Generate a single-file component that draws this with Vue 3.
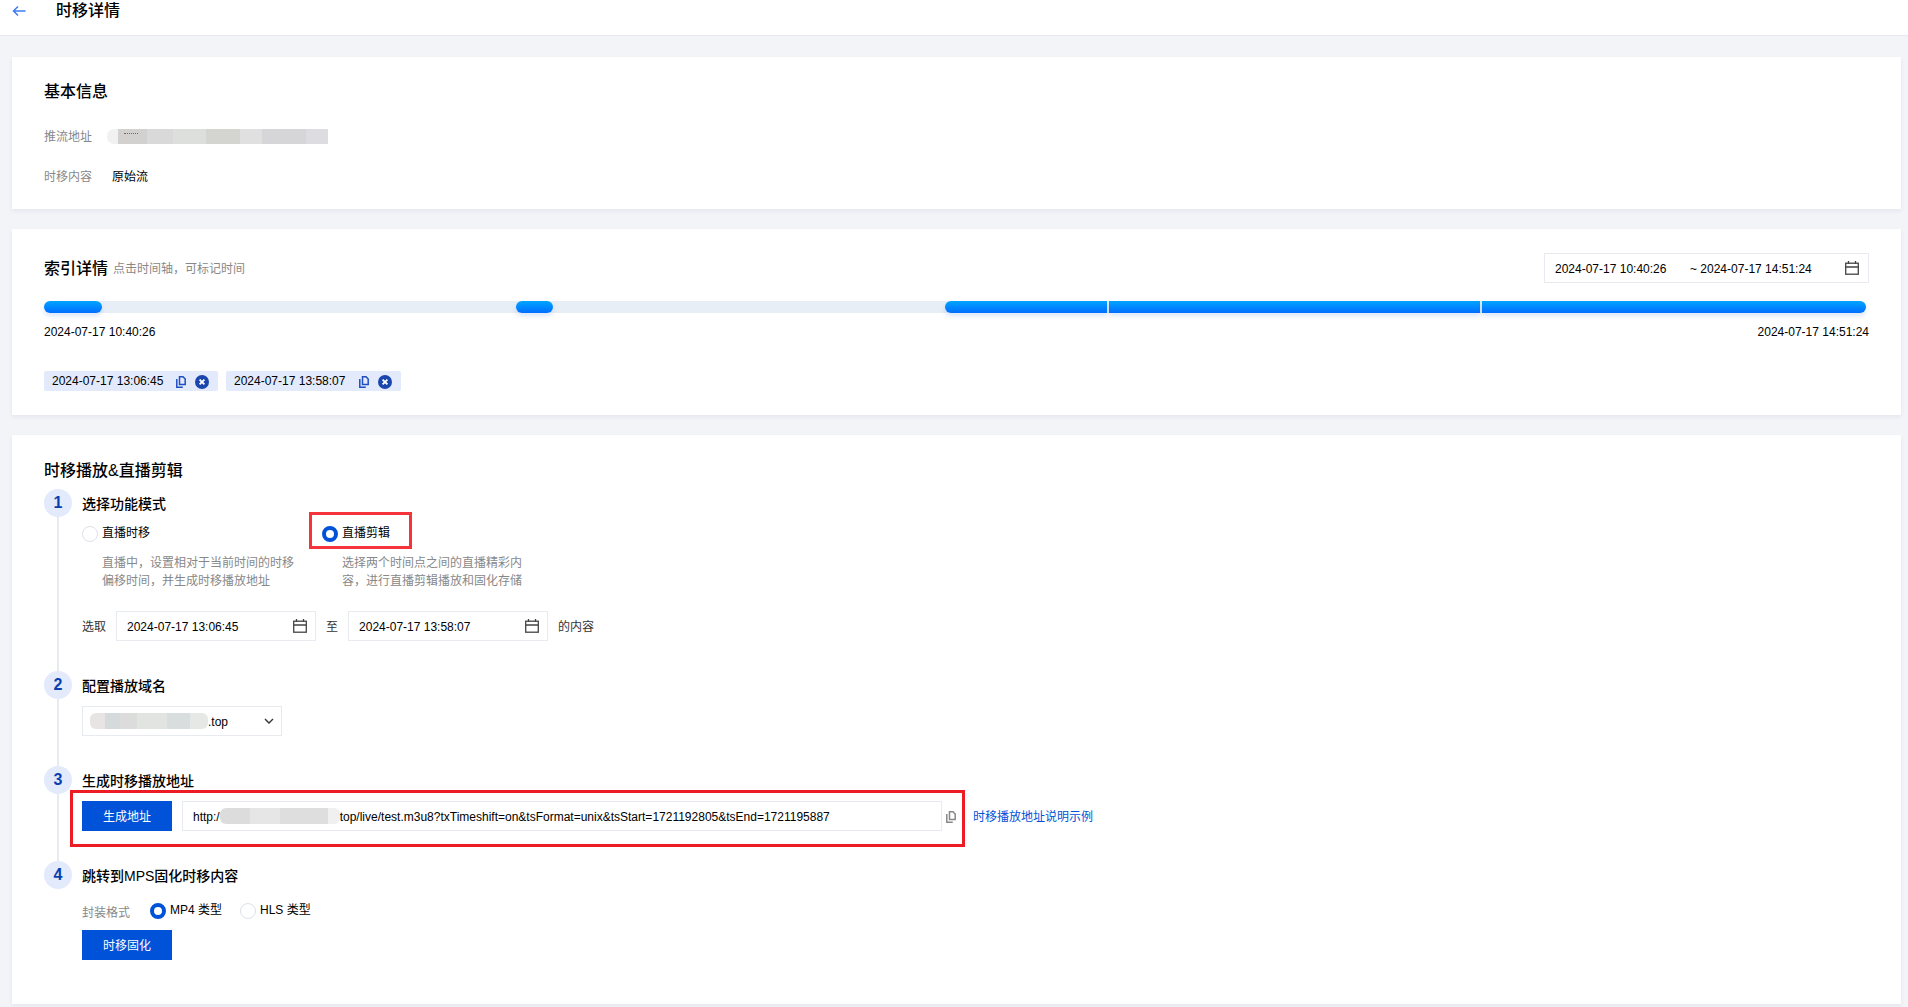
<script setup>
const segments = [
  { left: 0, width: 58 },
  { left: 472, width: 37 },
  { left: 901, width: 162 },
  { left: 1064.5, width: 371.5 },
  { left: 1437.5, width: 384.5 }
]
const tags = ['2024-07-17 13:06:45', '2024-07-17 13:58:07']
function segStyle(s) {
  return { left: s.left + 'px', width: s.width + 'px' }
}
</script>

<template>
  <div class="page">
    <header class="topbar">
      <svg class="back" width="14" height="12" viewBox="0 0 14 12" fill="none">
        <path d="M13.5 6H1.5M6 1.5L1.5 6L6 10.5" stroke="#3d7cf0" stroke-width="1.5" />
      </svg>
      <h1 class="page-title">时移详情</h1>
    </header>

    <section class="card info">
      <h2 class="card-title">基本信息</h2>
      <div class="info-row">
        <span class="label">推流地址</span>
        <span class="blur blur-url"><i class="dots"></i></span>
      </div>
      <div class="info-row">
        <span class="label">时移内容</span>
        <span class="value">原始流</span>
      </div>
    </section>

    <section class="card index">
      <div class="index-head">
        <div class="index-title">
          <h2 class="card-title">索引详情</h2>
          <span class="hint">点击时间轴，可标记时间</span>
        </div>
        <div class="range">
          <span class="range-start">2024-07-17 10:40:26</span>
          <span>~ 2024-07-17 14:51:24</span>
          <svg class="cal" width="14" height="14" viewBox="0 0 14 14" fill="none" stroke="#444" stroke-width="1.3">
            <rect x="0.7" y="2.2" width="12.6" height="11" /><path d="M0.7 6H13.3M3.5 0V3M10.5 0V3" />
          </svg>
        </div>
      </div>
      <div class="track">
        <i v-for="s in segments" :key="s.left" class="seg" :style="segStyle(s)"></i>
      </div>
      <div class="track-labels">
        <span>2024-07-17 10:40:26</span>
        <span>2024-07-17 14:51:24</span>
      </div>
      <div class="tags">
        <div v-for="t in tags" :key="t" class="tag">
          <span class="tag-text">{{ t }}</span>
          <svg class="tag-copy" width="10" height="12" viewBox="0 0 10 12" fill="none" stroke="#1f4fc0" stroke-width="1.5">
            <path d="M3.5 .8H7L9.2 3V8.6H3.5Z" /><path d="M.8 3V11.2H6.8" />
          </svg>
          <svg class="tag-close" width="14" height="14" viewBox="0 0 14 14">
            <circle cx="7" cy="7" r="7" fill="#1a46ad" />
            <path d="M4.6 4.6L9.4 9.4M9.4 4.6L4.6 9.4" stroke="#fff" stroke-width="1.9" />
          </svg>
        </div>
      </div>
    </section>

    <section class="card play">
      <h2 class="card-title">时移播放&amp;直播剪辑</h2>
      <div class="steps">
        <div class="step">
          <div class="rail"><span class="num">1</span><i class="line"></i></div>
          <div class="body body-pad">
            <h3 class="step-title">选择功能模式</h3>
            <div class="modes">
              <div class="mode">
                <div class="radio-line"><i class="radio"></i><span>直播时移</span></div>
                <p class="desc">直播中，设置相对于当前时间的时移<br />偏移时间，并生成时移播放地址</p>
              </div>
              <div class="mode">
                <div class="radio-line marked"><i class="radio on"></i><span>直播剪辑</span><i class="red red-mode"></i></div>
                <p class="desc">选择两个时间点之间的直播精彩内<br />容，进行直播剪辑播放和固化存储</p>
              </div>
            </div>
            <div class="pick-row">
              <span class="txt">选取</span>
              <div class="field picker">
                <span>2024-07-17 13:06:45</span>
                <svg width="14" height="14" viewBox="0 0 14 14" fill="none" stroke="#444" stroke-width="1.3">
                  <rect x="0.7" y="2.2" width="12.6" height="11" /><path d="M0.7 6H13.3M3.5 0V3M10.5 0V3" />
                </svg>
              </div>
              <span class="txt">至</span>
              <div class="field picker">
                <span>2024-07-17 13:58:07</span>
                <svg width="14" height="14" viewBox="0 0 14 14" fill="none" stroke="#444" stroke-width="1.3">
                  <rect x="0.7" y="2.2" width="12.6" height="11" /><path d="M0.7 6H13.3M3.5 0V3M10.5 0V3" />
                </svg>
              </div>
              <span class="txt">的内容</span>
            </div>
          </div>
        </div>

        <div class="step">
          <div class="rail"><span class="num">2</span><i class="line"></i></div>
          <div class="body body-pad">
            <h3 class="step-title">配置播放域名</h3>
            <div class="field select">
              <span class="blur blur-domain"></span><span>.top</span>
              <svg class="chev" width="10" height="6" viewBox="0 0 10 6" fill="none" stroke="#333" stroke-width="1.4">
                <path d="M1 1L5 5L9 1" />
              </svg>
            </div>
          </div>
        </div>

        <div class="step">
          <div class="rail"><span class="num">3</span><i class="line"></i></div>
          <div class="body body-pad">
            <h3 class="step-title">生成时移播放地址</h3>
            <div class="gen-row">
              <button class="btn" type="button">生成地址</button>
              <div class="field url">
                <span>http:/</span><span class="blur blur-host"></span><span>top/live/test.m3u8?txTimeshift=on&amp;tsFormat=unix&amp;tsStart=1721192805&amp;tsEnd=1721195887</span>
              </div>
              <svg class="url-copy" width="10" height="12" viewBox="0 0 10 12" fill="none" stroke="#888" stroke-width="1.5">
                <path d="M3.5 .8H7L9.2 3V8.6H3.5Z" /><path d="M.8 3V11.2H6.8" />
              </svg>
              <a class="link">时移播放地址说明示例</a>
              <i class="red red-gen"></i>
            </div>
          </div>
        </div>

        <div class="step">
          <div class="rail"><span class="num">4</span></div>
          <div class="body">
            <h3 class="step-title">跳转到MPS固化时移内容</h3>
            <div class="format-row">
              <span class="label format-label">封装格式</span>
              <div class="radio-line"><i class="radio on"></i><span>MP4 类型</span></div>
              <div class="radio-line"><i class="radio"></i><span>HLS 类型</span></div>
            </div>
            <button class="btn solid-btn" type="button">时移固化</button>
          </div>
        </div>
      </div>
    </section>
  </div>
</template>

<style>
html, body { margin: 0; background: #f2f4f8; }
</style>

<style scoped>
.page {
  width: 1908px;
  height: 1007px;
  overflow: hidden;
  box-sizing: border-box;
  font: 12px/20px "Liberation Sans", "Noto Sans CJK SC", sans-serif;
  color: #000;
  background: #f2f4f8;
}
h1, h2, h3, p { margin: 0; font-weight: 400; }
.topbar {
  height: 36px;
  box-sizing: border-box;
  background: #fff;
  border-bottom: 1px solid #e6e9f0;
  display: flex;
  align-items: flex-start;
  padding-left: 12px;
}
.back { margin-top: 5px; }
.page-title { margin-left: 30px; padding-top: 1px; font-size: 16px; line-height: 20px; font-weight: 500; }
.card {
  width: 1889px;
  margin: 20px 0 0 12px;
  box-sizing: border-box;
  padding-left: 32px;
  padding-right: 32px;
  background: #fff;
  box-shadow: 0 2px 4px rgba(54, 58, 80, 0.07);
}
.card-title { box-sizing: border-box; height: 24px; padding-top: 1px; font-size: 16px; line-height: 24px; font-weight: 500; }
.info { margin-top: 21px; height: 152px; padding-top: 22px; }
.info-row { display: flex; align-items: center; height: 20px; margin-top: 20px; }
.info .card-title + .info-row { margin-top: 23px; }
.label { width: 68px; color: #888; flex: none; padding-top: 2px; }
.value { padding-top: 1px; }
.blur { display: inline-block; flex: none; }
.blur-url {
  width: 221px;
  height: 15px;
  margin-left: -5px;
  border-radius: 7px 0 0 7px;
  background: linear-gradient(90deg, #f0f1f0 0 5%, #d2d1d0 5% 18%, #d9d9d9 18% 30%, #dcdfdc 30% 45%, #d4d4d0 45% 60%, #dfe0df 60% 70%, #d6d5d8 70% 90%, #dddce0 90%);
}
.dots {
  display: block;
  width: 14px;
  margin: 4px 0 0 17px;
  border-top: 1px dotted #8a5a5a;
}
.index { height: 186px; padding-top: 24px; }
.index-head { display: flex; justify-content: space-between; height: 30px; }
.index-title { display: flex; align-items: center; gap: 5px; }
.hint { color: #888; margin-top: 2px; }
.range {
  width: 325px;
  height: 30px;
  box-sizing: border-box;
  border: 1px solid #e7eaef;
  display: flex;
  align-items: center;
  padding: 0 9px 0 10px;
}
.range > span { padding-top: 2px; }
.range-start { width: 135px; }
.cal { margin-left: auto; }
.track {
  position: relative;
  width: 1822px;
  height: 12px;
  margin-top: 18px;
  background: #e7eef6;
  border-radius: 6px;
}
.seg {
  position: absolute;
  top: 0;
  height: 12px;
  border-radius: 6px;
  background: linear-gradient(180deg, #00a4ff, #006eff);
  box-shadow: 0 3px 5px rgba(0, 80, 200, 0.15);
}
.seg:nth-child(3) { border-radius: 6px 0 0 6px; }
.seg:nth-child(4) { border-radius: 0; }
.seg:nth-child(5) { border-radius: 0 6px 6px 0; }
.track-labels { display: flex; justify-content: space-between; margin-top: 9px; }
.tags { display: flex; gap: 8px; margin-top: 29px; }
.tag {
  height: 20px;
  width: 174px;
  box-sizing: border-box;
  padding-left: 8px;
  display: flex;
  align-items: center;
  background: #e3eafb;
  border-radius: 2px;
}
.tag:last-child { width: 175px; }
.tag:last-child .tag-text { width: 125px; }
.tag-text { width: 124px; margin-top: -1px; }
.tag-copy { margin: 2px 9px 0 0; }
.tag-close { margin-top: 2px; }
.play { height: 569px; padding-top: 23px; }
.steps { margin-top: 7px; }
.step { display: flex; gap: 10px; }
.rail { width: 28px; flex: none; display: flex; flex-direction: column; align-items: center; }
.num {
  width: 28px;
  height: 28px;
  flex: none;
  border-radius: 50%;
  background: #e2eafc;
  color: #0a3fb0;
  font-size: 16px;
  font-weight: 700;
  line-height: 28px;
  text-align: center;
}
.line { flex: 1; width: 2px; background: #e7eaef; }
.body { flex: 1; min-width: 0; }
.body-pad { padding-bottom: 30px; }
.step-title { box-sizing: border-box; height: 28px; padding-top: 1px; font-size: 14px; line-height: 28px; font-weight: 500; }
.modes { display: flex; margin-top: 9px; }
.mode { width: 240px; }
.radio-line { display: flex; gap: 4px; line-height: 12px; }
.radio-line span { padding-top: 1px; }
.radio {
  width: 16px;
  height: 16px;
  flex: none;
  box-sizing: border-box;
  border: 1px solid #dde1e8;
  border-radius: 50%;
  background: #fff;
}
.radio.on { border: 4px solid #0052d9; }
.marked { position: relative; }
.desc { margin: 12px 0 0 20px; color: #888; line-height: 18px; }
.pick-row { display: flex; align-items: center; gap: 10px; margin-top: 21px; }
.txt { color: #333; padding-top: 2px; }
.field {
  box-sizing: border-box;
  height: 30px;
  border: 1px solid #e7eaef;
  display: flex;
  align-items: center;
  background: #fff;
}
.field > span:not(.blur) { padding-top: 2px; }
.picker { width: 200px; padding: 0 8px 0 10px; justify-content: space-between; }
.select { width: 200px; margin-top: 7px; padding-left: 7px; }
.blur-domain {
  width: 118px;
  height: 16px;
  border-radius: 6px;
  background: linear-gradient(90deg, #e8e4e4 0 13%, #d5dada 13% 25%, #dcdcdc 25% 40%, #e2e4e2 40% 65%, #d8dede 65% 85%, #e6e8e6 85%);
}
.chev { margin-left: auto; margin-right: 7px; }
.gen-row { position: relative; display: flex; align-items: center; margin-top: 7px; }
.btn {
  width: 90px;
  height: 30px;
  flex: none;
  padding: 2px 0 0;
  border: 0;
  background: #0052d9;
  color: #fff;
  font: inherit;
}
.url { width: 760px; margin-left: 10px; padding-left: 10px; flex: none; }
.blur-host {
  width: 120px;
  height: 16px;
  border-radius: 6px;
  background: linear-gradient(90deg, #dcdcdc 0 25%, #e6e6e6 25% 50%, #dedede 50% 90%, #f0f0f0 90%);
}
.url-copy { margin: 2px 0 0 4px; }
.link { margin-left: 17px; padding-top: 2px; color: #0052d9; }
.red {
  position: absolute;
  box-sizing: border-box;
  border: 3px solid #f5333a;
  pointer-events: none;
}
.red-mode { left: -13px; top: -14px; width: 103px; height: 37px; }
.red-gen { left: -12px; top: -11px; width: 895px; height: 57px; border-color: #ed1c24; }
.format-row { display: flex; align-items: flex-start; margin-top: 11px; height: 20px; }
.format-label { margin-top: 1px; line-height: 20px; }
.format-row .radio-line { width: 90px; line-height: 14px; }
.format-row .radio-line:last-child { width: auto; }
.format-row .radio-line .radio { margin-top: 3px; }
.format-row .radio-line span { margin-top: 2px; }
.solid-btn { display: block; margin-top: 10px; }
</style>
